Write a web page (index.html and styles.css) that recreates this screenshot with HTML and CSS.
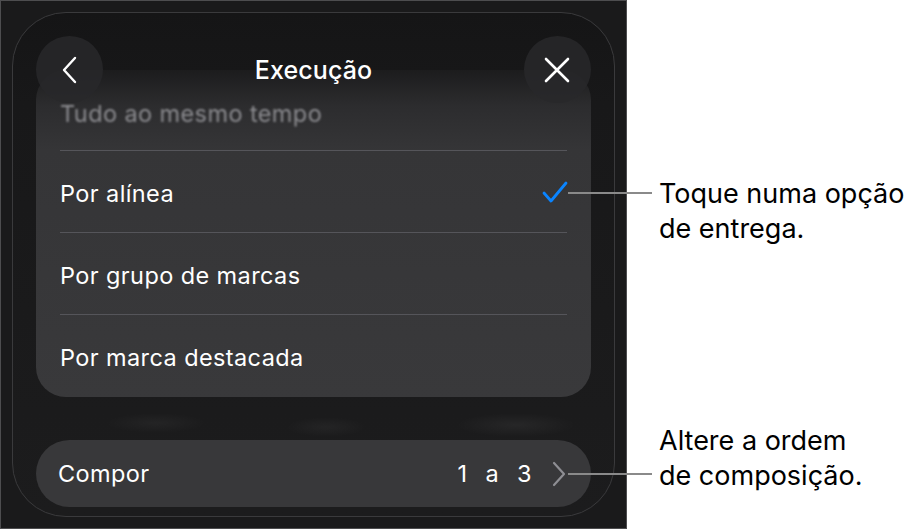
FILE: index.html
```html
<!DOCTYPE html>
<html lang="pt">
<head>
<meta charset="utf-8">
<title>Execução</title>
<link rel="stylesheet" href="styles.css">
</head>
<body>
<div class="stage">
  <div class="device">
    <div class="sheet">
      <header class="sheet-header">
        <button class="round-btn" aria-label="Voltar">
          <svg width="20" height="28" viewBox="0 0 20 28"><path d="M15 2 L4 14 L15 26" fill="none" stroke="#fff" stroke-width="2.4" stroke-linecap="round" stroke-linejoin="round"/></svg>
        </button>
        <h1 class="sheet-title">Execução</h1>
        <button class="round-btn" aria-label="Fechar">
          <svg width="28" height="28" viewBox="0 0 28 28"><path d="M3 3 L25 25 M25 3 L3 25" fill="none" stroke="#fff" stroke-width="2.6" stroke-linecap="round"/></svg>
        </button>
      </header>

      <ul class="options">
        <li class="option option-faded"><span>Tudo ao mesmo tempo</span></li>
        <li class="option"><span>Por alínea</span>
          <svg class="check" width="28" height="24" viewBox="0 0 28 24"><path d="M3 13 L10 21 L25 3" fill="none" stroke="#0a84ff" stroke-width="2.8" stroke-linecap="round" stroke-linejoin="round"/></svg>
        </li>
        <li class="option"><span>Por grupo de marcas</span></li>
        <li class="option option-last"><span>Por marca destacada</span></li>
      </ul>

      <div class="backdrop-blur"></div>

      <div class="compose">
        <span>Compor</span>
        <span class="compose-value">
          <span class="compose-range">1 a 3</span>
          <svg width="14" height="26" viewBox="0 0 14 26"><path d="M2 2 L12 13 L2 24" fill="none" stroke="#8e8e93" stroke-width="2.2" stroke-linecap="round" stroke-linejoin="round"/></svg>
        </span>
      </div>
    </div>
  </div>

  <div class="callouts">
    <div class="callout callout-first">
      <span class="leader"></span>
      <p>Toque numa opção<br>de entrega.</p>
    </div>
    <div class="callout callout-second">
      <span class="leader"></span>
      <p>Altere a ordem<br>de composição.</p>
    </div>
  </div>
</div>
</body>
</html>
```

FILE: styles.css
```css
* { box-sizing: border-box; }

html, body {
  margin: 0;
  padding: 0;
  background: #fff;
}

body {
  font-family: Inter, "Noto Sans", "Liberation Sans", sans-serif;
  width: 915px;
  height: 529px;
  overflow: hidden;
}

.stage {
  display: flex;
  align-items: flex-start;
}

/* dark device frame */
.device {
  width: 627px;
  height: 529px;
  flex: none;
  background: #1a1a1b;
  border: 1px solid #4d4d4f;
  padding: 11px;
}

.sheet {
  height: 100%;
  border: 1px solid #3a3a3c;
  border-radius: 54px;
  background: linear-gradient(#151516 0, #181819 90px, #1c1c1d 100%);
  padding: 23px 23px 8px;
  display: flex;
  flex-direction: column;
}

.sheet-header {
  position: relative;
  z-index: 2;
  height: 67px;
  display: flex;
  align-items: center;
  justify-content: space-between;
}

.round-btn {
  width: 67px;
  height: 67px;
  border-radius: 50%;
  border: none;
  padding: 0;
  background: rgba(40, 40, 42, 0.85);
  display: flex;
  align-items: center;
  justify-content: center;
}

.sheet-title {
  margin: 0;
  color: #fff;
  font-size: 25px;
  font-weight: 500;
  letter-spacing: 0.1px;
}

/* grouped option list */
.options {
  list-style: none;
  margin: -33px 0 0;
  padding: 0 24px;
  border-radius: 30px;
  background: linear-gradient(#1c1c1d 0, #2c2c2e 35px, #353537 80px, #39393b 100%);
}

.option {
  height: 82px;
  padding-top: 3px;
  display: flex;
  align-items: center;
  justify-content: space-between;
  border-bottom: 1px solid #55555a;
  color: #fff;
  font-size: 23.5px;
  letter-spacing: 0.4px;
}

.option-faded {
  height: 81px;
  padding-top: 6px;
  color: #8c8c90;
}

.option-faded span {
  filter: blur(1px);
}

.option-last {
  border-bottom: none;
}

.check {
  margin-right: -2px;
  margin-top: -3px;
}

/* soft shapes of the content behind the sheet */
.backdrop-blur {
  height: 43px;
  background:
    radial-gradient(ellipse 50px 10px at 120px 26px, rgba(255,255,255,0.04), transparent),
    radial-gradient(ellipse 40px 10px at 290px 30px, rgba(255,255,255,0.04), transparent),
    radial-gradient(ellipse 60px 12px at 480px 28px, rgba(255,255,255,0.05), transparent);
}

.compose {
  height: 67px;
  border-radius: 34px;
  background: #38383a;
  display: flex;
  align-items: center;
  justify-content: space-between;
  padding: 0 25px 0 22px;
  color: #fff;
  font-size: 23.5px;
  letter-spacing: 0.4px;
}

.compose-value {
  display: flex;
  align-items: center;
  gap: 20px;
}

.compose-range {
  word-spacing: 11px;
}

/* annotations on the right */
.callouts {
  margin-left: -59px;
  display: flex;
  flex-direction: column;
}

.callout {
  display: flex;
  align-items: flex-start;
}

.callout-first { margin-top: 176px; }
.callout-second { margin-top: 177px; align-items: flex-end; }

.leader {
  width: 84px;
  height: 2px;
  margin-top: 16px;
  margin-right: 7px;
  background: #8a8a8a;
  flex: none;
}

.callout-second .leader {
  margin-top: 0;
  margin-bottom: 18px;
}

.callout p {
  margin: 0;
  color: #000;
  font-size: 27px;
  line-height: 35px;
  white-space: nowrap;
}
```
